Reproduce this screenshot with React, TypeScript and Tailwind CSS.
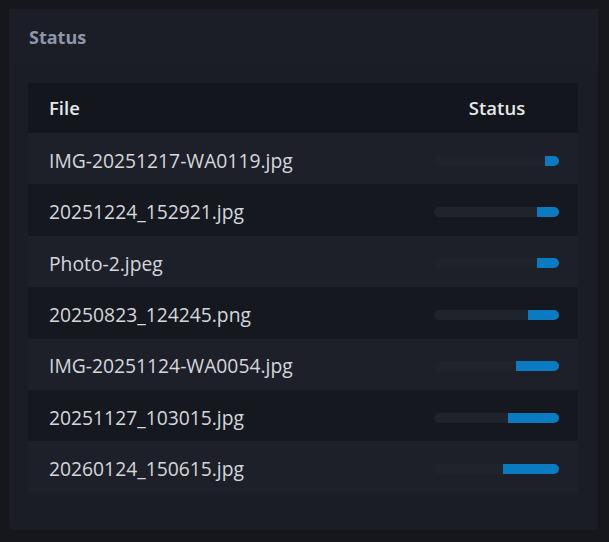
import React from "react";

const rows = [
  { name: "IMG-20251217-WA0119.jpg", fill: 14 },
  { name: "20251224_152921.jpg", fill: 22 },
  { name: "Photo-2.jpeg", fill: 22 },
  { name: "20250823_124245.png", fill: 31 },
  { name: "IMG-20251124-WA0054.jpg", fill: 43 },
  { name: "20251127_103015.jpg", fill: 51 },
  { name: "20260124_150615.jpg", fill: 56 },
];

export default function App() {
  return (
    <div
      className="w-[609px] h-[542px] bg-[#15171d] pt-[9px] pl-[9px]"
      style={{ fontFamily: '"Open Sans", "Noto Sans", sans-serif' }}
    >
      <div className="w-[589px] h-[521px] bg-[#1a1d25] rounded-[3px] flex flex-col">
        <div className="h-[56px] flex items-center px-[20px] bg-[#1b1e26]">
          <span className="text-[18px] font-bold text-[#8e97a8]">Status</span>
        </div>
        <div className="px-[19px] pt-[18px]">
          <div className="w-[550px] flex flex-col">
            <div className="h-[50px] flex items-center bg-[#13161c]">
              <div className="flex-1 pl-[21px] text-[18.5px] font-semibold text-[#e6e8eb]">File</div>
              <div className="w-[166px] pl-[4px] text-center text-[18.5px] font-semibold text-[#e6e8eb]">Status</div>
            </div>
            {rows.map((r, i) => (
              <div
                key={r.name}
                className={`h-[51.4px] pt-[4px] flex items-center ${i % 2 === 0 ? "bg-[#1d2029]" : "bg-[#15181e]"}`}
              >
                <div className="flex-1 pl-[21px] pt-[1px] text-[19.3px] text-[#d4d7dc]">{r.name}</div>
                <div className="w-[166px] flex justify-end pr-[19px]">
                  <div className="w-[125px] h-[10px] rounded-full bg-[#1f242c] overflow-hidden flex justify-end">
                    <div className="h-full bg-[#0b7bc1]" style={{ width: `${r.fill}px` }} />
                  </div>
                </div>
              </div>
            ))}
          </div>
        </div>
      </div>
    </div>
  );
}
